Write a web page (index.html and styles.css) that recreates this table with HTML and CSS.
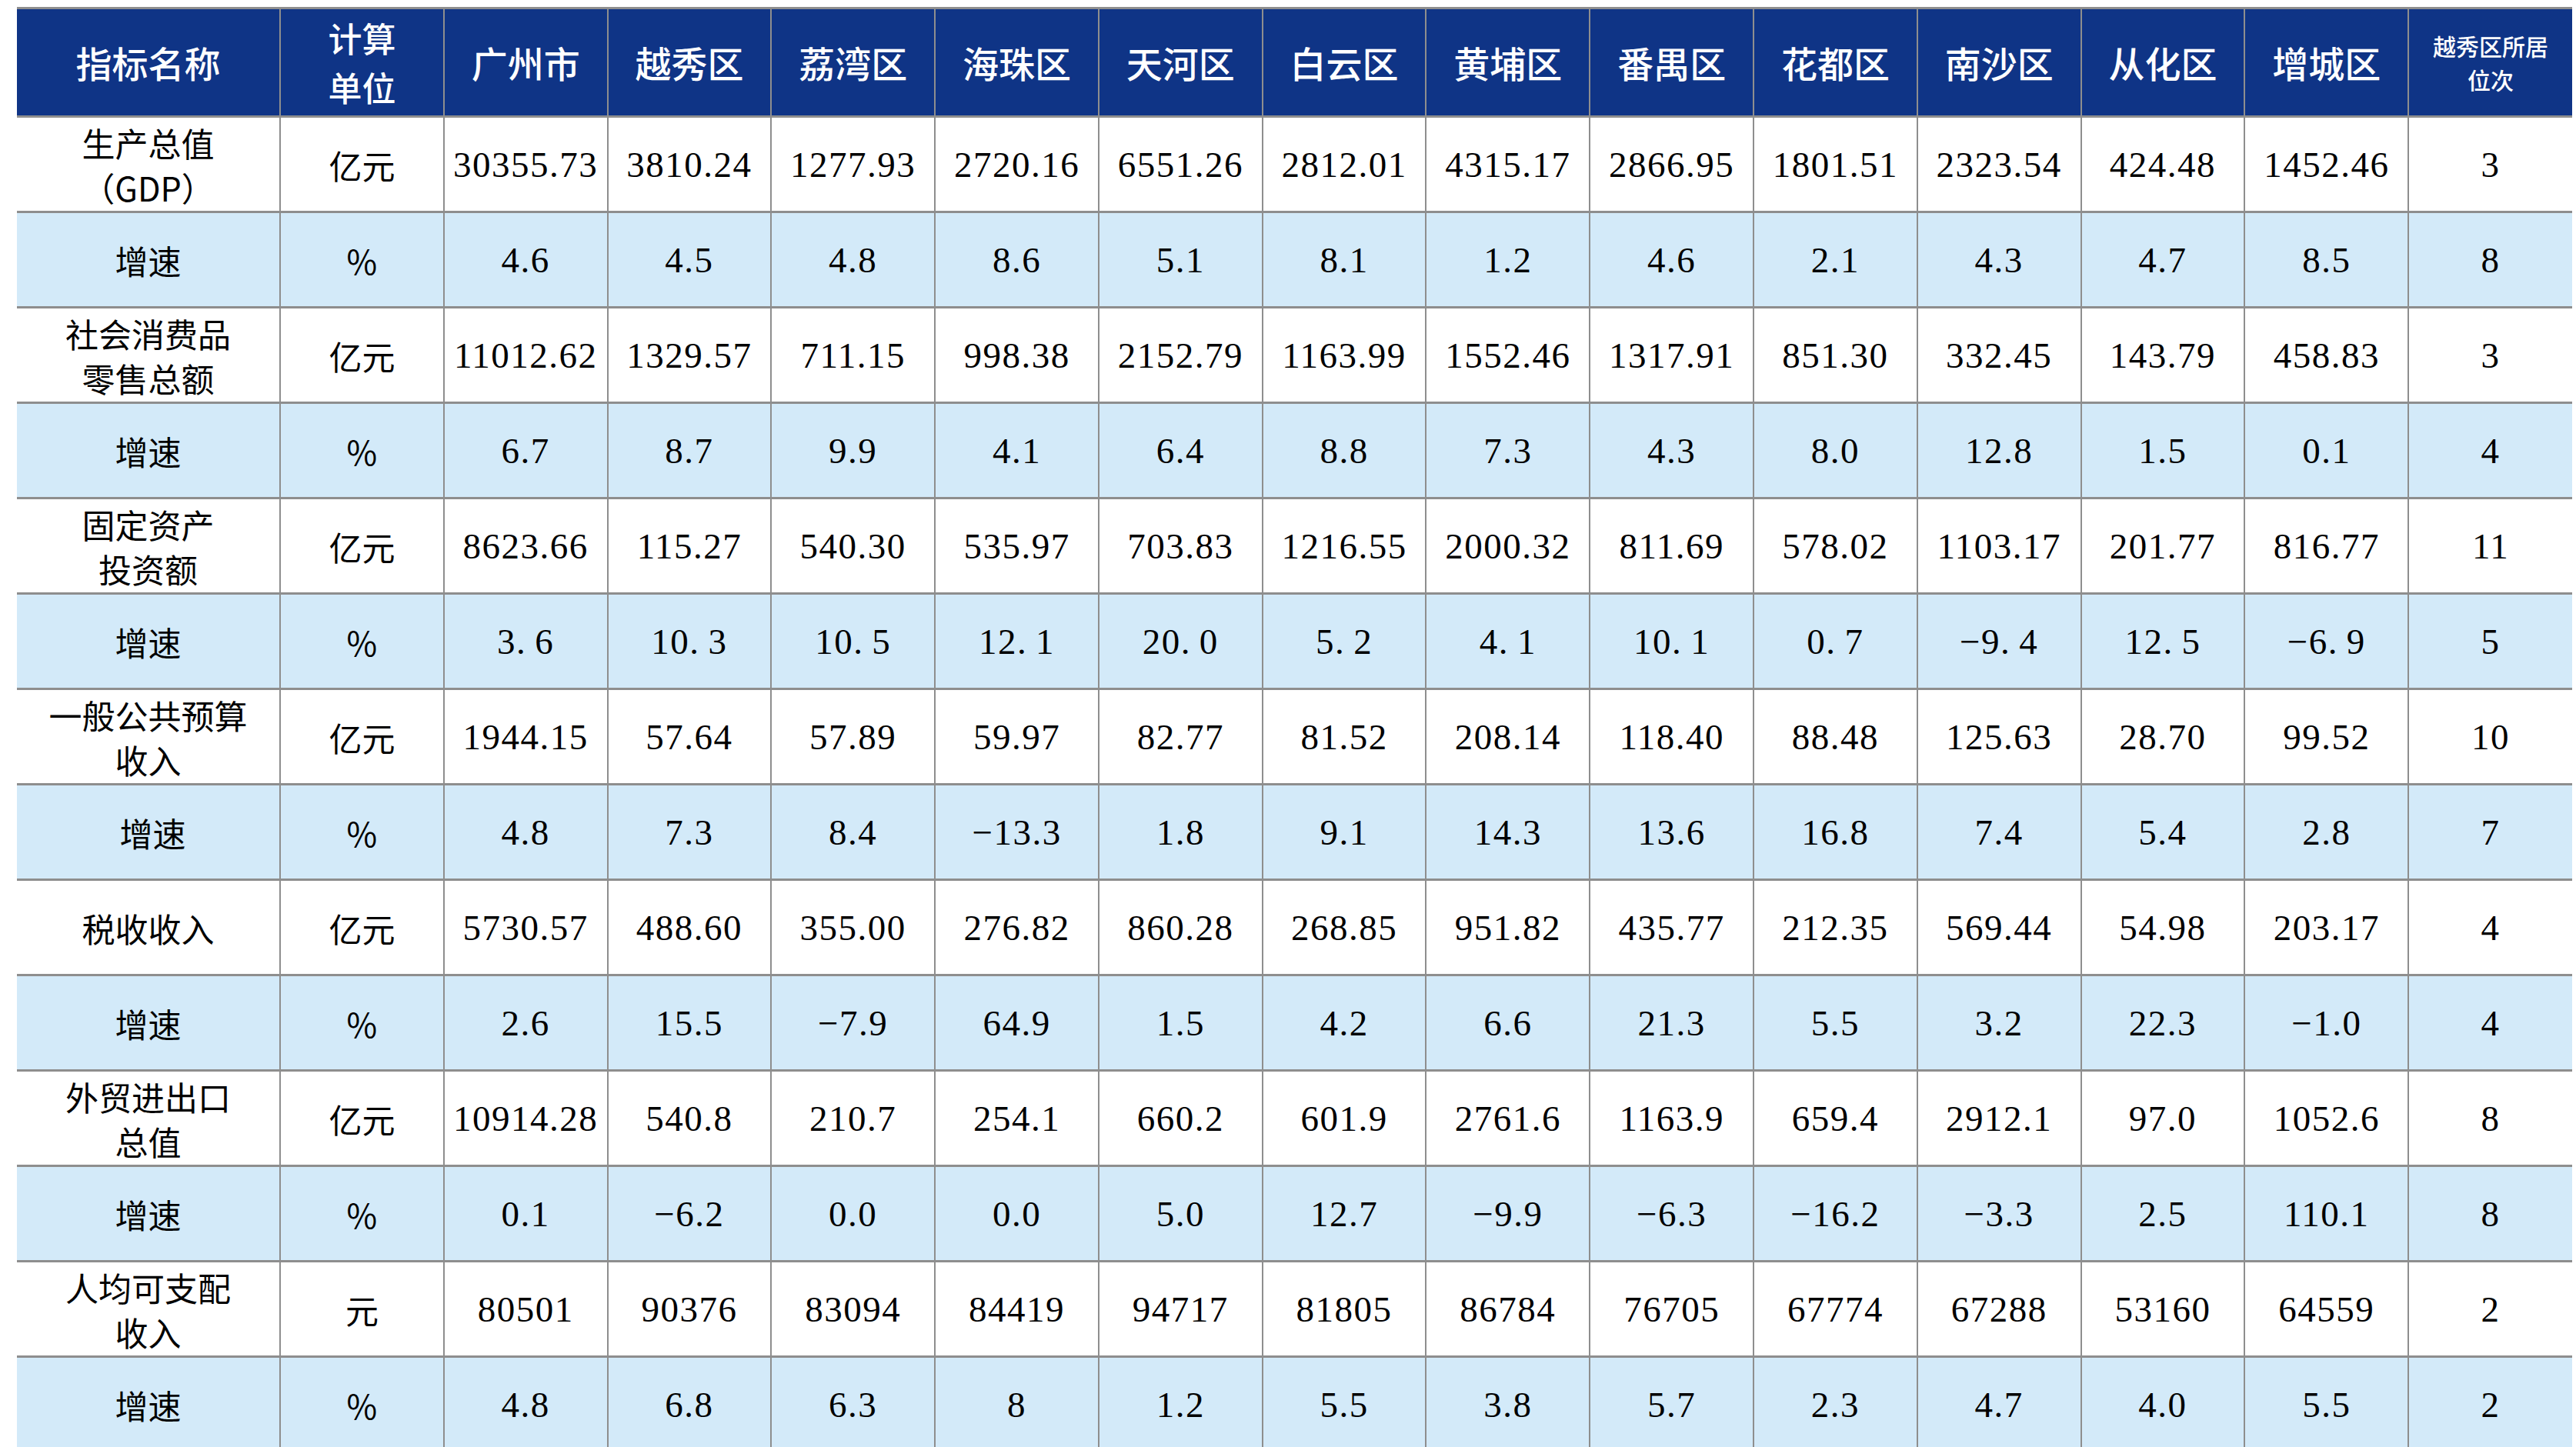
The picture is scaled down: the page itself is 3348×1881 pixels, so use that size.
FILE: index.html
```html
<!DOCTYPE html>
<html lang="zh-CN">
<head>
<meta charset="utf-8">
<title>广州市各区主要经济指标</title>
<link rel="stylesheet" href="styles.css">
</head>
<body>
<table class="stats">
  <colgroup>
    <col class="c-name"><col span="14" class="c-num">
  </colgroup>
  <thead>
    <tr>
      <th>指标名称</th>
      <th class="two">计算<br>单位</th>
      <th>广州市</th>
      <th>越秀区</th>
      <th>荔湾区</th>
      <th>海珠区</th>
      <th>天河区</th>
      <th>白云区</th>
      <th>黄埔区</th>
      <th>番禺区</th>
      <th>花都区</th>
      <th>南沙区</th>
      <th>从化区</th>
      <th>增城区</th>
      <th class="small">越秀区所居<br>位次</th>
    </tr>
  </thead>
  <tbody>
    <tr class="main">
      <td class="name">生产总值<br>（GDP）</td><td class="unit">亿元</td>
      <td>30355.73</td><td>3810.24</td><td>1277.93</td><td>2720.16</td><td>6551.26</td><td>2812.01</td><td>4315.17</td><td>2866.95</td><td>1801.51</td><td>2323.54</td><td>424.48</td><td>1452.46</td><td>3</td>
    </tr>
    <tr class="rate">
      <td class="name">增速</td><td class="unit">%</td>
      <td>4.6</td><td>4.5</td><td>4.8</td><td>8.6</td><td>5.1</td><td>8.1</td><td>1.2</td><td>4.6</td><td>2.1</td><td>4.3</td><td>4.7</td><td>8.5</td><td>8</td>
    </tr>
    <tr class="main">
      <td class="name">社会消费品<br>零售总额</td><td class="unit">亿元</td>
      <td>11012.62</td><td>1329.57</td><td>711.15</td><td>998.38</td><td>2152.79</td><td>1163.99</td><td>1552.46</td><td>1317.91</td><td>851.30</td><td>332.45</td><td>143.79</td><td>458.83</td><td>3</td>
    </tr>
    <tr class="rate">
      <td class="name">增速</td><td class="unit">%</td>
      <td>6.7</td><td>8.7</td><td>9.9</td><td>4.1</td><td>6.4</td><td>8.8</td><td>7.3</td><td>4.3</td><td>8.0</td><td>12.8</td><td>1.5</td><td>0.1</td><td>4</td>
    </tr>
    <tr class="main">
      <td class="name">固定资产<br>投资额</td><td class="unit">亿元</td>
      <td>8623.66</td><td>115.27</td><td>540.30</td><td>535.97</td><td>703.83</td><td>1216.55</td><td>2000.32</td><td>811.69</td><td>578.02</td><td>1103.17</td><td>201.77</td><td>816.77</td><td>11</td>
    </tr>
    <tr class="rate wide">
      <td class="name">增速</td><td class="unit">%</td>
      <td>3.&thinsp;6</td><td>10.&thinsp;3</td><td>10.&thinsp;5</td><td>12.&thinsp;1</td><td>20.&thinsp;0</td><td>5.&thinsp;2</td><td>4.&thinsp;1</td><td>10.&thinsp;1</td><td>0.&thinsp;7</td><td>−9.&thinsp;4</td><td>12.&thinsp;5</td><td>−6.&thinsp;9</td><td>5</td>
    </tr>
    <tr class="main">
      <td class="name">一般公共预算<br>收入</td><td class="unit">亿元</td>
      <td>1944.15</td><td>57.64</td><td>57.89</td><td>59.97</td><td>82.77</td><td>81.52</td><td>208.14</td><td>118.40</td><td>88.48</td><td>125.63</td><td>28.70</td><td>99.52</td><td>10</td>
    </tr>
    <tr class="rate">
      <td class="name shift">增速</td><td class="unit">%</td>
      <td>4.8</td><td>7.3</td><td>8.4</td><td>−13.3</td><td>1.8</td><td>9.1</td><td>14.3</td><td>13.6</td><td>16.8</td><td>7.4</td><td>5.4</td><td>2.8</td><td>7</td>
    </tr>
    <tr class="main">
      <td class="name">税收收入</td><td class="unit">亿元</td>
      <td>5730.57</td><td>488.60</td><td>355.00</td><td>276.82</td><td>860.28</td><td>268.85</td><td>951.82</td><td>435.77</td><td>212.35</td><td>569.44</td><td>54.98</td><td>203.17</td><td>4</td>
    </tr>
    <tr class="rate">
      <td class="name">增速</td><td class="unit">%</td>
      <td>2.6</td><td>15.5</td><td>−7.9</td><td>64.9</td><td>1.5</td><td>4.2</td><td>6.6</td><td>21.3</td><td>5.5</td><td>3.2</td><td>22.3</td><td>−1.0</td><td>4</td>
    </tr>
    <tr class="main">
      <td class="name">外贸进出口<br>总值</td><td class="unit">亿元</td>
      <td>10914.28</td><td>540.8</td><td>210.7</td><td>254.1</td><td>660.2</td><td>601.9</td><td>2761.6</td><td>1163.9</td><td>659.4</td><td>2912.1</td><td>97.0</td><td>1052.6</td><td>8</td>
    </tr>
    <tr class="rate">
      <td class="name">增速</td><td class="unit">%</td>
      <td>0.1</td><td>−6.2</td><td>0.0</td><td>0.0</td><td>5.0</td><td>12.7</td><td>−9.9</td><td>−6.3</td><td>−16.2</td><td>−3.3</td><td>2.5</td><td>110.1</td><td>8</td>
    </tr>
    <tr class="main">
      <td class="name">人均可支配<br>收入</td><td class="unit">元</td>
      <td>80501</td><td>90376</td><td>83094</td><td>84419</td><td>94717</td><td>81805</td><td>86784</td><td>76705</td><td>67774</td><td>67288</td><td>53160</td><td>64559</td><td>2</td>
    </tr>
    <tr class="rate">
      <td class="name">增速</td><td class="unit">%</td>
      <td>4.8</td><td>6.8</td><td>6.3</td><td>8</td><td>1.2</td><td>5.5</td><td>3.8</td><td>5.7</td><td>2.3</td><td>4.7</td><td>4.0</td><td>5.5</td><td>2</td>
    </tr>
  </tbody>
</table>
</body>
</html>
```

FILE: styles.css
```css
html, body {
  margin: 0;
  padding: 0;
  overflow: hidden;
  background: #ffffff;
}

body {
  padding: 9px 0 0 22px;
}

.stats {
  border-collapse: collapse;
  table-layout: fixed;
  width: 3321px;
  font-family: "Liberation Serif", "Noto Sans CJK SC", serif;
  color: #000;
}

.c-name { width: 342px; }

.stats th,
.stats td {
  border-left: 2px solid #8e8e8e;
  border-right: 2px solid #8e8e8e;
  border-top: 3px solid #8e8e8e;
  border-bottom: 3px solid #8e8e8e;
  text-align: center;
  vertical-align: middle;
  padding: 0;
}

.stats th:first-child,
.stats td:first-child { border-left: none; }

.stats th:last-child,
.stats td:last-child { border-right: none; }

.stats thead tr { height: 141px; }

.stats th {
  background: #0f3486;
  color: #ffffff;
  font-family: "Noto Sans CJK SC", "Noto Sans", sans-serif;
  font-weight: 500;
  font-size: 47px;
  line-height: 60px;
}

.stats th.two {
  font-size: 44px;
  line-height: 64px;
}

.stats th.small {
  font-size: 30px;
  line-height: 44px;
}

.stats tbody tr { height: 124px; }

.stats tr.rate td { background: #d3eaf9; }
.stats tr.main td { background: #ffffff; }

.stats td {
  font-size: 47px;
  letter-spacing: 1.5px;
  line-height: 58px;
}

.stats td.name,
.stats td.unit {
  font-family: "Noto Sans CJK SC", "Noto Sans", sans-serif;
  font-size: 43px;
  letter-spacing: 0;
  font-weight: 400;
  line-height: 58px;
}

.stats td.shift { padding-left: 12px; }
```
